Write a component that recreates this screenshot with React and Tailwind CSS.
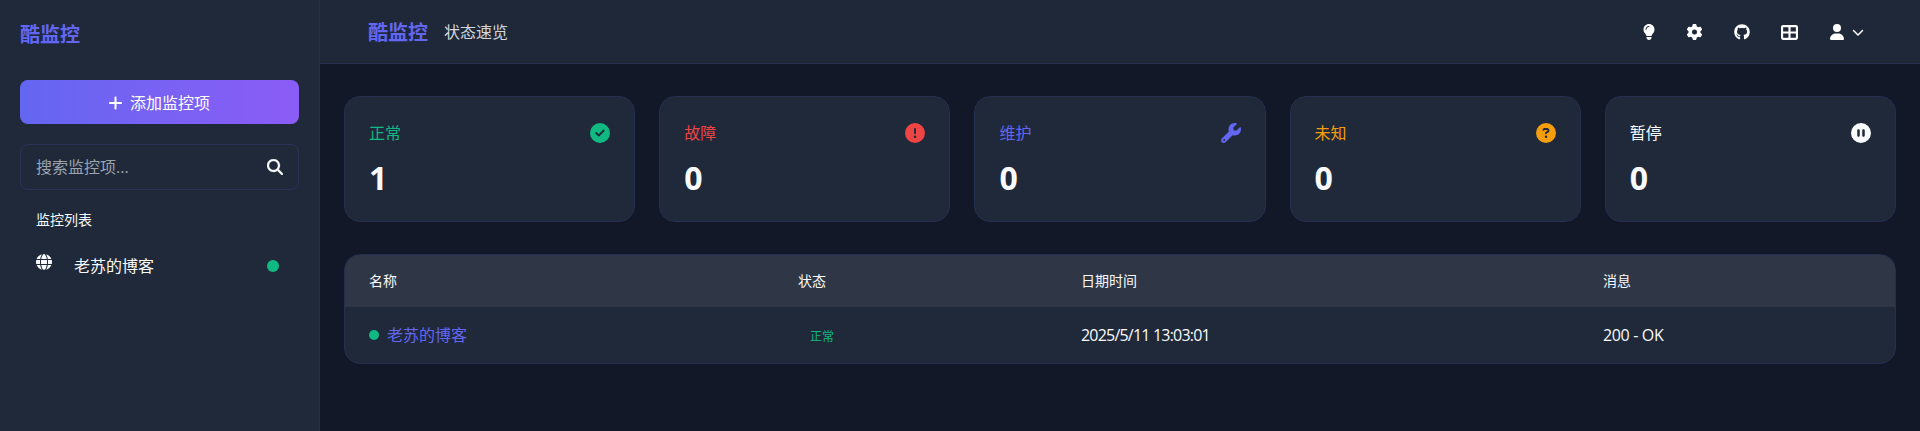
import { FaPlus, FaMagnifyingGlass, FaGlobe, FaCircleCheck, FaCircleExclamation, FaWrench, FaCircleQuestion, FaCirclePause, FaLightbulb, FaGear, FaGithub, FaTableCellsLarge, FaUser, FaChevronDown } from "react-icons/fa6";

const stats = [
  { label: "正常", value: 1, Icon: FaCircleCheck, color: "text-[#10b981]" },
  { label: "故障", value: 0, Icon: FaCircleExclamation, color: "text-[#ef4444]" },
  { label: "维护", value: 0, Icon: FaWrench, color: "text-[#6366f1]" },
  { label: "未知", value: 0, Icon: FaCircleQuestion, color: "text-[#f59e0b]" },
  { label: "暂停", value: 0, Icon: FaCirclePause, color: "text-[#f8fafc]" },
];

function Sidebar() {
  return (
    <aside className="flex w-80 shrink-0 flex-col border-r border-[#262f4d] bg-[#1f293a] px-5">
      <div className="mt-[21px] text-xl leading-7 font-bold text-[#6366f1]">酷监控</div>
      <button className="mt-[31px] flex h-11 items-center justify-center gap-[7px] rounded-lg bg-linear-to-r from-[#6366f1] to-[#8b5cf6] pt-px pr-px text-base text-white">
        <FaPlus className="h-4 w-[15px]" />
        <span>添加监控项</span>
      </button>
      <div className="mt-5 flex h-[46px] items-center justify-between rounded-lg border border-[#2a325a] px-[15px]">
        <span className="text-base text-[#9ca3af]">搜索监控项...</span>
        <FaMagnifyingGlass className="size-4" stroke="currentColor" strokeWidth="8" />
      </div>
      <div className="mt-5 px-4 text-sm leading-5">监控列表</div>
      <div className="mt-4 flex h-10 items-center px-4">
        <FaGlobe className="-mt-2 size-4" />
        <span className="ml-[22px] flex-1 text-base">老苏的博客</span>
        <span className="mr-1 size-3 rounded-full bg-[#10b981]" />
      </div>
    </aside>
  );
}

function Header() {
  return (
    <header className="flex h-16 shrink-0 items-center justify-between border-b border-[#262f4d] bg-[#1f2838] pr-14 pl-12">
      <div className="flex items-center gap-4">
        <span className="pt-0.5 text-xl font-bold text-[#6366f1]">酷监控</span>
        <span className="text-base text-[#d4d7dd]">状态速览</span>
      </div>
      <div className="flex items-center gap-[31px] pt-px text-white">
        <FaLightbulb className="h-4 w-3" />
        <FaGear className="h-4 w-[17px]" />
        <FaGithub className="h-4 w-4" />
        <FaTableCellsLarge className="size-[17px]" />
        <div className="flex items-center gap-[7px]">
          <FaUser className="size-4" />
          <FaChevronDown className="size-3" />
        </div>
      </div>
    </header>
  );
}

export default function App() {
  return (
    <div className="flex h-[431px] bg-[#121827] font-['Open_Sans','Noto_Sans_CJK_SC',sans-serif] text-[#f8fafc]">
      <Sidebar />
      <div className="flex min-w-0 flex-1 flex-col">
        <Header />
        <main className="flex flex-col gap-8 px-6 pt-8">
          <section className="grid grid-cols-5 gap-6">
            {stats.map(({ label, value, Icon, color }) => (
              <div key={label} className="h-[126px] rounded-2xl border border-[#262f4f] bg-[#1f293a] px-6 pt-6">
                <div className={`flex h-6 items-center justify-between ${color}`}>
                  <span className="text-base leading-6">{label}</span>
                  <Icon className="size-5" />
                </div>
                <div className="mt-[13px] text-[32px] leading-10 font-bold">{value}</div>
              </div>
            ))}
          </section>
          <section className="overflow-hidden rounded-2xl border border-[#262f4f] bg-[#1f293a]">
            <div className="grid h-[52px] grid-cols-[429px_283px_522px_1fr] items-center bg-[#2f3747] text-sm">
              <span className="px-6">名称</span>
              <span className="px-6">状态</span>
              <span className="px-6">日期时间</span>
              <span className="px-6">消息</span>
            </div>
            <div className="grid h-14 grid-cols-[429px_283px_522px_1fr] items-center text-base">
              <div className="flex items-center gap-2 px-6">
                <span className="size-2.5 rounded-full bg-[#10b981]" />
                <span className="text-[#6366f1]">老苏的博客</span>
              </div>
              <span className="pt-[3px] pl-9 text-xs text-[#10b981]">正常</span>
              <span className="px-6 tracking-[-0.8px]">2025/5/11 13:03:01</span>
              <span className="px-6 tracking-[-0.35px]">200 - OK</span>
            </div>
          </section>
        </main>
      </div>
    </div>
  );
}
